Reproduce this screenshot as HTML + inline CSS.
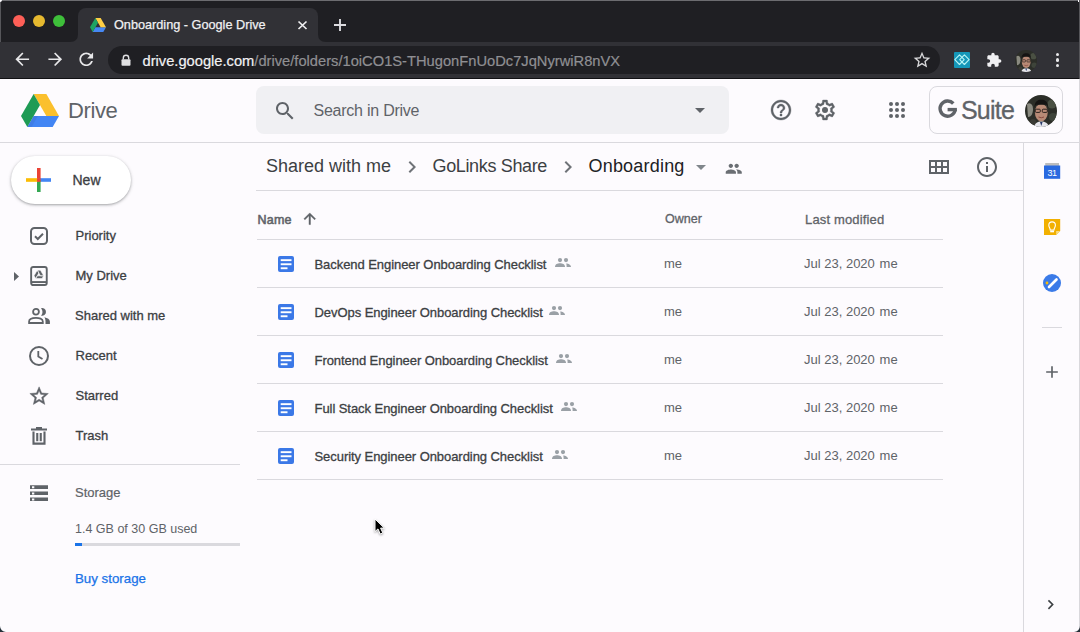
<!DOCTYPE html>
<html><head><meta charset="utf-8">
<style>
*{margin:0;padding:0;box-sizing:border-box}
html,body{width:1080px;height:632px;overflow:hidden;background:#fdfbfe;font-family:"Liberation Sans",sans-serif}
.a{position:absolute}
.t{position:absolute;white-space:nowrap;line-height:1}
.m{-webkit-text-stroke:0.3px currentColor}
svg{position:absolute;overflow:visible}
</style></head><body>
<!-- ============ CHROME ============ -->
<div class="a" style="left:0;top:0;width:1080px;height:79px;background:#1f1f23"></div>
<div class="a" style="left:0;top:0;width:1080px;height:1px;background:#6c6c70"></div>
<div class="a" style="left:1079px;top:0;width:1px;height:632px;background:#d9d8dc"></div>
<div class="a" style="left:0;top:0;width:1px;height:79px;background:#56565a"></div>
<div class="a" style="left:0;top:0;width:2px;height:2px;background:#fdfbfe;border-bottom-right-radius:2px"></div>
<div class="a" style="left:1078px;top:0;width:2px;height:2px;background:#fdfbfe"></div>
<!-- traffic lights -->
<div class="a" style="left:13px;top:15.2px;width:12px;height:12px;border-radius:50%;background:#fe5f57"></div>
<div class="a" style="left:33px;top:15.2px;width:12px;height:12px;border-radius:50%;background:#e6b92f"></div>
<div class="a" style="left:53px;top:15.2px;width:12px;height:12px;border-radius:50%;background:#3ebf3a"></div>
<!-- toolbar -->
<div class="a" style="left:0;top:41.5px;width:1080px;height:36.5px;background:#313136"></div>
<div class="a" style="left:0;top:78px;width:1080px;height:1px;background:#111114"></div>
<!-- tab -->
<div class="a" style="left:78px;top:8px;width:240px;height:34px;background:#313136;border-radius:8px 8px 0 0"></div>
<svg style="left:70px;top:33.5px" width="8" height="8"><path d="M0 8 Q8 8 8 0 L8 8Z" fill="#313136"/></svg>
<svg style="left:318px;top:33.5px" width="8" height="8"><path d="M8 8 Q0 8 0 0 L0 8Z" fill="#313136"/></svg>
<!-- favicon -->
<svg style="left:90px;top:17.6px" width="16" height="14" viewBox="0 0 1443 1250"><path fill="#4688f4" d="M240.5 1250l240.5-416.7h962L1202.5 1250z"/><path fill="#ffcf45" d="M962 833.3h481L962 0H481z"/><path fill="#1fa463" d="M0 833.3L240.5 1250l481-833.3L481 0z"/></svg>
<div class="t" style="left:114px;top:18.5px;font-size:12.7px;color:#f0f0f2;-webkit-text-stroke:0.25px #f0f0f2">Onboarding - Google Drive</div>
<svg style="left:297.5px;top:20.8px" width="9" height="8.5"><path d="M0.5 0.5L8.5 8M8.5 0.5L0.5 8" stroke="#f0f0f2" stroke-width="1.7"/></svg>
<svg style="left:334px;top:19px" width="12" height="12"><path d="M6 0V12M0 6H12" stroke="#dcdce0" stroke-width="1.9"/></svg>
<!-- nav -->
<svg style="left:11.6px;top:49px" width="20.5" height="20.5" viewBox="0 0 24 24"><path fill="#e8e8ea" d="M20 11H7.83l5.59-5.59L12 4l-8 8 8 8 1.41-1.41L7.83 13H20v-2z"/></svg>
<svg style="left:44.7px;top:49px" width="20.5" height="20.5" viewBox="0 0 24 24"><path fill="#e8e8ea" d="M12 4l-1.41 1.41L16.17 11H4v2h12.17l-5.58 5.59L12 20l8-8z"/></svg>
<svg style="left:75.7px;top:49px" width="20.5" height="20.5" viewBox="0 0 24 24"><path fill="#e8e8ea" d="M17.65 6.35C16.2 4.9 14.21 4 12 4c-4.42 0-7.99 3.58-7.99 8s3.57 8 7.99 8c3.73 0 6.84-2.55 7.73-6h-2.08c-.82 2.33-3.04 4-5.650 4-3.31 0-6-2.69-6-6s2.69-6 6-6c1.66 0 3.14.69 4.22 1.780L13 11h7V4l-2.35 2.35z"/></svg>
<!-- omnibox -->
<div class="a" style="left:108px;top:46px;width:832px;height:28px;border-radius:14px;background:#1f1f23"></div>
<svg style="left:121px;top:54px" width="10" height="12"><path d="M2.3 5.5V4a2.7 2.7 0 0 1 5.4 0v1.5" fill="none" stroke="#e0e0e2" stroke-width="1.4"/><rect x="0.5" y="5.2" width="9" height="6.6" rx="1" fill="#e0e0e2"/></svg>
<div class="t" style="left:142.5px;top:53.5px;font-size:14.7px;color:#f2f2f4;-webkit-text-stroke:0.2px currentColor">drive.google.com<span style="color:#8f8f93">/drive/folders/1oiCO1S-THugonFnUoDc7JqNyrwiR8nVX</span></div>
<svg style="left:912px;top:50px" width="20" height="20" viewBox="0 0 24 24"><path fill="#d8d8da" d="M22 9.24l-7.19-.62L12 2 9.19 8.63 2 9.24l5.46 4.73L5.82 21 12 17.27 18.18 21l-1.63-7.03L22 9.24zM12 15.4l-3.76 2.27 1-4.28-3.32-2.88 4.38-.38L12 6.1l1.71 4.04 4.38.38-3.32 2.88 1 4.28L12 15.4z"/></svg>
<!-- extension -->
<div class="a" style="left:954px;top:52px;width:16px;height:16px;border-radius:1px;background:#1597b8"></div>
<svg style="left:954px;top:52px" width="16" height="16"><path d="M5.5 2.9L10.2 7.7L5.5 12.5L0.8 7.7Z" fill="none" stroke="#b6f4f6" stroke-width="1.1" stroke-linejoin="round"/><path d="M10.4 2.9L15.1 7.7L10.4 12.5L5.7 7.7Z" fill="none" stroke="#b6f4f6" stroke-width="1.1" stroke-linejoin="round"/></svg>
<svg style="left:985.5px;top:52px" width="16" height="16" viewBox="0 0 24 24"><path fill="#f0f0f2" d="M20.5 11H19V7c0-1.1-.9-2-2-2h-4V3.5C13 2.12 11.88 1 10.5 1S8 2.12 8 3.5V5H4c-1.1 0-1.99.9-1.990 2v3.8H3.5c1.49 0 2.7 1.21 2.7 2.7s-1.21 2.7-2.7 2.7H2V20c0 1.1.9 2 2 2h3.8v-1.5c0-1.490 1.21-2.7 2.7-2.7 1.49 0 2.7 1.21 2.7 2.7V22H17c1.1 0 2-.9 2-2v-4h1.5c1.38 0 2.5-1.12 2.5-2.5S21.88 11 20.5 11z"/></svg>
<!-- chrome avatar -->
<svg style="left:1015px;top:49.5px" width="22" height="22" viewBox="0 0 32 32"><defs><clipPath id="avc2"><circle cx="16" cy="16" r="16"/></clipPath></defs><g clip-path="url(#avc2)"><rect width="32" height="32" fill="#2c2e28"/><path d="M2 9C5 7 8 9 8 14S6 22 3 22Z" fill="#8a8a80"/><circle cx="27" cy="9" r="4.5" fill="#4a5043"/><circle cx="28" cy="22" r="4" fill="#3e443a"/><circle cx="8" cy="27" r="3" fill="#3a3a34"/><ellipse cx="16.3" cy="17.5" rx="6.4" ry="8.8" fill="#b88a76"/><path d="M9.6 13C9.3 6.5 12.5 4.8 16.3 4.8S23.3 6.5 23 13L21.8 9.8H10.8Z" fill="#151413"/><rect x="10.3" y="14.2" width="5" height="3.2" rx="1" fill="none" stroke="#2a211d" stroke-width="1"/><rect x="17.3" y="14.2" width="5" height="3.2" rx="1" fill="none" stroke="#2a211d" stroke-width="1"/><path d="M13.5 22Q16.3 23.5 19 22" fill="none" stroke="#8a4a40" stroke-width="1"/><path d="M9 32C10 28 12.5 26.5 16.3 26.5S23 28 24 32Z" fill="#e4e4ea"/><path d="M15 27L16.3 31L17.6 27Z" fill="#2a3a6a"/></g></svg>
<div class="a" style="left:1056.3px;top:52.6px;width:3.2px;height:3.2px;border-radius:50%;background:#e8e8ea"></div>
<div class="a" style="left:1056.3px;top:58.4px;width:3.2px;height:3.2px;border-radius:50%;background:#e8e8ea"></div>
<div class="a" style="left:1056.3px;top:64.2px;width:3.2px;height:3.2px;border-radius:50%;background:#e8e8ea"></div>

<div class="a" style="left:1079px;top:0;width:1px;height:79px;background:#56565a"></div>
<!-- ============ DRIVE HEADER ============ -->
<svg style="left:21px;top:93.5px" width="38" height="33" viewBox="0 0 1443 1250"><path fill="#4285f4" d="M240.5 1250l240.5-416.7h962L1202.5 1250z"/><path fill="#fbc02d" d="M962 833.3h481L962 0H481z"/><path fill="#1e9b55" d="M0 833.3L240.5 1250l481-833.3L481 0z"/><path fill="#3b74d8" opacity=".5" d="M240.5 1250l240.5-416.7h160L400 1250z"/></svg>
<div class="t" style="left:68px;top:100.4px;font-size:22px;color:#5f6368;letter-spacing:-0.4px">Drive</div>
<!-- search -->
<div class="a" style="left:256px;top:86px;width:473px;height:48px;border-radius:8px;background:#f0f0f3"></div>
<svg style="left:273px;top:99px" width="24" height="24" viewBox="0 0 24 24"><path fill="#5f6368" d="M15.5 14h-.79l-.28-.27C15.41 12.59 16 11.11 16 9.5 16 5.91 13.09 3 9.5 3S3 5.91 3 9.5 5.91 16 9.5 16c1.61 0 3.090-.59 4.23-1.57l.27.28v.79l5 4.99L20.49 19l-4.99-5zm-6 0C7.01 14 5 11.99 5 9.5S7.01 5 9.5 5 14 7.01 14 9.5 11.99 14 9.5 14z"/></svg>
<div class="t" style="left:313.5px;top:103.1px;font-size:16px;color:#5f6368;letter-spacing:-0.24px">Search in Drive</div>
<svg style="left:688px;top:98px" width="24" height="24" viewBox="0 0 24 24"><path fill="#5f6368" d="M7 10l5 5 5-5z"/></svg>
<!-- help / settings / apps -->
<svg style="left:769px;top:98px" width="24" height="24" viewBox="0 0 24 24"><path fill="#5f6368" stroke="#5f6368" stroke-width="0.35" d="M11 18h2v-2h-2v2zm1-16C6.48 2 2 6.48 2 12s4.48 10 10 10 10-4.48 10-10S17.52 2 12 2zm0 18c-4.41 0-8-3.59-8-8s3.59-8 8-8 8 3.59 8 8-3.59 8-8 8zm0-14c-2.21 0-4 1.79-4 4h2c0-1.1.9-2 2-2s2 .9 2 2c0 2-3 1.75-3 5h2c0-2.25 3-2.5 3-5 0-2.21-1.79-4-4-4z"/></svg>
<svg style="left:813px;top:98px" width="24" height="24" viewBox="0 0 24 24"><path fill="#5f6368" stroke="#5f6368" stroke-width="0.35" d="M19.43 12.98c.04-.32.07-.64.07-.98 0-.34-.03-.66-.07-.98l2.11-1.65c.19-.15.24-.42.12-.64l-2-3.46c-.09-.16-.26-.25-.44-.25-.06 0-.12.01-.17.03l-2.49 1c-.52-.4-1.08-.73-1.69-.98l-.38-2.65C14.46 2.18 14.25 2 14 2h-4c-.25 0-.46.18-.49.42l-.38 2.65c-.61.25-1.17.59-1.690.98l-2.49-1c-.06-.02-.12-.03-.18-.03-.17 0-.34.09-.43.25l-2 3.46c-.13.22-.07.49.12.64l2.11 1.65c-.04.32-.07.65-.07.98 0 .33.03.66.07.98l-2.11 1.65c-.19.15-.24.42-.12.64l2 3.46c.09.16.26.25.44.25.06 0 .12-.01.17-.03l2.49-1c.52.4 1.08.73 1.69.98l.38 2.65c.03.24.24.42.49.42h4c.25 0 .46-.18.49-.42l.38-2.65c.61-.25 1.17-.59 1.69-.98l2.49 1c.06.02.12.03.18.03.17 0 .34-.09.43-.25l2-3.46c.12-.22.07-.49-.12-.64l-2.11-1.65zm-1.98-1.71c.04.31.05.52.05.73 0 .21-.02.43-.05.73l-.14 1.13.89.7 1.08.84-.7 1.21-1.27-.51-1.04-.42-.9.68c-.43.32-.84.56-1.25.73l-1.06.43-.16 1.13-.2 1.35h-1.4l-.19-1.35-.16-1.13-1.06-.43c-.43-.18-.83-.41-1.23-.71l-.91-.7-1.06.43-1.27.51-.7-1.21 1.08-.84.89-.7-.14-1.13c-.03-.31-.05-.54-.05-.74s.02-.43.05-.73l.14-1.13-.89-.7-1.08-.84.7-1.21 1.27.51 1.04.42.9-.68c.43-.32.84-.56 1.25-.73l1.06-.43.16-1.13.2-1.35h1.39l.19 1.35.16 1.13 1.06.43c.43.18.83.41 1.23.71l.91.7 1.06-.43 1.27-.51.7 1.21-1.07.85-.89.7.14 1.13z"/><circle cx="12" cy="12" r="3" fill="#5f6368"/></svg>
<svg style="left:889px;top:102px" width="16" height="16"><g fill="#5f6368"><circle cx="2" cy="2" r="2"/><circle cx="8" cy="2" r="2"/><circle cx="14" cy="2" r="2"/><circle cx="2" cy="8" r="2"/><circle cx="8" cy="8" r="2"/><circle cx="14" cy="8" r="2"/><circle cx="2" cy="14" r="2"/><circle cx="8" cy="14" r="2"/><circle cx="14" cy="14" r="2"/></g></svg>
<!-- G Suite -->
<div class="a" style="left:929px;top:86px;width:134px;height:48px;border-radius:8px;border:1px solid #dad9de"></div>
<svg style="left:937.5px;top:100.4px" width="20" height="19" viewBox="0 0 20 19"><path d="M15.3 3.5A7.6 7.6 0 1 0 17.2 9.6" fill="none" stroke="#5f6368" stroke-width="3.4"/><rect x="9.6" y="7.9" width="9.3" height="3.4" fill="#5f6368"/></svg>
<div class="t" style="left:961px;top:98px;font-size:25px;color:#5f6368;letter-spacing:-0.8px;-webkit-text-stroke:0.3px #5f6368">Suite</div>
<svg style="left:1025px;top:95px" width="32" height="32"><defs><clipPath id="avc"><circle cx="16" cy="16" r="16"/></clipPath></defs><g clip-path="url(#avc)"><rect width="32" height="32" fill="#2c2e28"/><path d="M2 9C5 7 8 9 8 14S6 22 3 22Z" fill="#8a8a80"/><circle cx="27" cy="9" r="4.5" fill="#4a5043"/><circle cx="28" cy="22" r="4" fill="#3e443a"/><circle cx="8" cy="27" r="3" fill="#3a3a34"/><ellipse cx="16.3" cy="17.5" rx="6.4" ry="8.8" fill="#b88a76"/><path d="M9.6 13C9.3 6.5 12.5 4.8 16.3 4.8S23.3 6.5 23 13L21.8 9.8H10.8Z" fill="#151413"/><rect x="10.3" y="14.2" width="5" height="3.2" rx="1" fill="none" stroke="#2a211d" stroke-width="1"/><rect x="17.3" y="14.2" width="5" height="3.2" rx="1" fill="none" stroke="#2a211d" stroke-width="1"/><path d="M13.5 22Q16.3 23.5 19 22" fill="none" stroke="#8a4a40" stroke-width="1"/><path d="M9 32C10 28 12.5 26.5 16.3 26.5S23 28 24 32Z" fill="#e4e4ea"/><path d="M15 27L16.3 31L17.6 27Z" fill="#2a3a6a"/></g></svg>
<!-- header line -->
<div class="a" style="left:0;top:142px;width:1080px;height:1px;background:#dad9de"></div>

<!-- ============ SIDEBAR ============ -->
<div class="a" style="left:11px;top:156px;width:120px;height:48px;border-radius:24px;background:#fff;box-shadow:0 1px 2px 0 rgba(60,64,67,.30),0 1px 3px 1px rgba(60,64,67,.15)"></div>
<svg style="left:26px;top:168px" width="25" height="24"><rect x="11" y="0" width="3.6" height="12" fill="#ea4335"/><rect x="12.5" y="10.2" width="12.5" height="3.6" fill="#4285f4"/><rect x="11" y="12" width="3.6" height="12" fill="#34a853"/><rect x="0" y="10.2" width="12.5" height="3.6" fill="#fbbc04"/><rect x="11" y="10.2" width="3.6" height="3.6" fill="#ea4335"/></svg>
<div class="t m" style="left:72.5px;top:173.3px;font-size:14px;color:#3c4043">New</div>

<!-- priority -->
<svg style="left:30px;top:227px" width="18" height="18"><rect x="1" y="1" width="16" height="16" rx="3.5" fill="none" stroke="#5f6368" stroke-width="2"/><path d="M5 9.2L7.8 12L13 6.8" fill="none" stroke="#5f6368" stroke-width="2"/></svg>
<div class="t m" style="left:75.5px;top:229.2px;font-size:13px;color:#3c4043">Priority</div>
<!-- my drive -->
<svg style="left:14px;top:271.5px" width="5" height="9"><path d="M0 0L5 4.5L0 9Z" fill="#5f6368"/></svg>
<svg style="left:30px;top:266px" width="18" height="20"><rect x="1.15" y="0.95" width="15.6" height="18.1" rx="2" fill="none" stroke="#5f6368" stroke-width="1.9"/><rect x="1" y="15.1" width="16" height="1.9" fill="#5f6368"/><svg x="4" y="4.2" width="9.7" height="8.4" viewBox="0 0 1443 1250"><path fill="#5f6368" stroke="#fdfbfe" stroke-width="90" d="M240.5 1250l240.5-416.7h962L1202.5 1250zM962 833.3h481L962 0H481zM0 833.3L240.5 1250l481-833.3L481 0z"/></svg></svg>
<div class="t m" style="left:75.5px;top:269.2px;font-size:13px;color:#3c4043">My Drive</div>
<!-- shared -->
<svg style="left:28px;top:308px" width="22" height="16"><circle cx="8" cy="3.7" r="2.9" fill="none" stroke="#5f6368" stroke-width="1.8"/><path d="M1.1 15V13.5C1.1 10.5 5 9.9 8 9.9S14.8 10.5 14.8 13.5V15Z" fill="none" stroke="#5f6368" stroke-width="1.8"/><path d="M13 0.2A3.9 3.9 0 1 1 13 7.7A5.44 5.44 0 0 0 13 0.2Z" fill="#5f6368"/><path d="M16.4 9.3C19.5 10 21.9 11.5 21.9 13.5V15.9H17.5V13.5C17.5 11.8 17.2 10.4 16.4 9.3Z" fill="#5f6368"/></svg>
<div class="t m" style="left:75px;top:309.2px;font-size:13px;color:#3c4043">Shared with me</div>
<!-- recent -->
<svg style="left:29px;top:346px" width="20" height="20"><circle cx="10" cy="10" r="9" fill="none" stroke="#5f6368" stroke-width="2"/><path d="M9.3 5V10.5L13.5 13" fill="none" stroke="#5f6368" stroke-width="1.8"/></svg>
<div class="t m" style="left:75.5px;top:349.2px;font-size:13px;color:#3c4043">Recent</div>
<!-- starred -->
<svg style="left:27.75px;top:385px" width="22.2" height="22.2" viewBox="0 0 24 24"><path fill="#5f6368" stroke="#5f6368" stroke-width="0.5" d="M22 9.24l-7.19-.62L12 2 9.19 8.63 2 9.24l5.46 4.73L5.82 21 12 17.27 18.18 21l-1.63-7.03L22 9.24zM12 15.4l-3.76 2.27 1-4.28-3.32-2.88 4.38-.38L12 6.1l1.71 4.04 4.38.38-3.32 2.88 1 4.28L12 15.4z"/></svg>
<div class="t m" style="left:75.5px;top:389.2px;font-size:13px;color:#3c4043">Starred</div>
<!-- trash -->
<svg style="left:31px;top:427px" width="16" height="18"><rect x="0" y="1.5" width="16" height="2" fill="#5f6368"/><rect x="5" y="0" width="6" height="2" fill="#5f6368"/><path d="M2.5 4.5V16.6H13.5V4.5" fill="none" stroke="#5f6368" stroke-width="2.1"/><rect x="5.2" y="6" width="2.1" height="8.2" fill="#5f6368"/><rect x="8.7" y="6" width="2.1" height="8.2" fill="#5f6368"/></svg>
<div class="t m" style="left:75.5px;top:429.2px;font-size:13px;color:#3c4043">Trash</div>
<!-- divider -->
<div class="a" style="left:0;top:464px;width:240px;height:1px;background:#dad9de"></div>
<!-- storage -->
<svg style="left:30px;top:484.6px" width="18" height="16.2"><path fill="#5f6368" fill-rule="evenodd" d="M0 0.3H18V4H0ZM2 1.3V3.3H4.3V1.3Z M0 6.4H18V10.1H0ZM2 7.4V9.4H4.3V7.4Z M0 12.4H18V16.1H0ZM2 13.4V15.4H4.3V13.4Z"/></svg>
<div class="t" style="left:75px;top:486.2px;font-size:13px;color:#5f6368;-webkit-text-stroke:0.2px #5f6368">Storage</div>
<div class="t" style="left:75px;top:522.5px;font-size:12.5px;color:#5f6368">1.4 GB of 30 GB used</div>
<div class="a" style="left:75px;top:543px;width:165px;height:3px;background:#dad9de"></div>
<div class="a" style="left:75px;top:543px;width:7px;height:3px;background:#1a73e8"></div>
<div class="t m" style="left:75px;top:572px;font-size:13.3px;color:#1a73e8;-webkit-text-stroke:0.25px #1a73e8">Buy storage</div>

<!-- ============ MAIN ============ -->
<div class="t" style="left:266px;top:157px;font-size:18px;color:#3c4043">Shared with me</div>
<svg style="left:400.4px;top:155px" width="24" height="24" viewBox="0 0 24 24"><path fill="#6f7378" d="M10 6L8.59 7.41 13.17 12l-4.58 4.59L10 18l6-6z"/></svg>
<div class="t" style="left:432.5px;top:157px;font-size:18px;color:#3c4043;letter-spacing:-0.35px">GoLinks Share</div>
<svg style="left:556px;top:155px" width="24" height="24" viewBox="0 0 24 24"><path fill="#6f7378" d="M10 6L8.59 7.41 13.17 12l-4.58 4.59L10 18l6-6z"/></svg>
<div class="t" style="left:588.5px;top:157px;font-size:18px;color:#202124;letter-spacing:0.2px">Onboarding</div>
<svg style="left:689px;top:155px" width="24" height="24" viewBox="0 0 24 24"><path fill="#80868b" d="M7 10l5 5 5-5z"/></svg>
<svg style="left:725px;top:160.2px" width="17.5" height="17.5" viewBox="0 0 24 24"><path fill="#6a6e73" d="M16 11c1.66 0 2.99-1.34 2.99-3S17.66 5 16 5c-1.66 0-3 1.34-3 3s1.34 3 3 3zm-8 0c1.66 0 2.99-1.34 2.99-3S9.66 5 8 5C6.34 5 5 6.34 5 8s1.34 3 3 3zm0 2c-2.33 0-7 1.17-7 3.5V19h14v-2.5c0-2.33-4.67-3.5-7-3.5zm8 0c-.29 0-.62.02-.97.05 1.16.84 1.97 1.97 1.97 3.45V19h6v-2.5c0-2.33-4.67-3.5-7-3.5z"/></svg>
<!-- grid / info -->
<svg style="left:929px;top:160px" width="20" height="14"><path d="M0 0H20V14H0ZM2 2V6H6V2ZM8 2V6H12V2ZM14 2V6H18V2ZM2 8V12H6V8ZM8 8V12H12V8ZM14 8V12H18V8Z" fill="#5f6368" fill-rule="evenodd"/></svg>
<svg style="left:975px;top:155px" width="24" height="24" viewBox="0 0 24 24"><path fill="#5f6368" d="M11 7h2v2h-2zm0 4h2v6h-2zm1-9C6.48 2 2 6.48 2 12s4.48 10 10 10 10-4.48 10-10S17.52 2 12 2zm0 18c-4.41 0-8-3.59-8-8s3.59-8 8-8 8 3.59 8 8-3.59 8-8 8z"/></svg>
<div class="a" style="left:256px;top:190px;width:767px;height:1px;background:#dad9de"></div>
<div class="a" style="left:1023px;top:143px;width:1px;height:489px;background:#dad9de"></div>

<!-- table header -->
<div class="t" style="left:257.5px;top:213.6px;font-size:12.5px;color:#5f6368;letter-spacing:0.2px;-webkit-text-stroke:0.55px #5f6368">Name</div>
<svg style="left:300.5px;top:210.1px" width="17.5" height="17.5" viewBox="0 0 24 24"><path fill="#5f6368" stroke="#5f6368" stroke-width="0.6" d="M4 12l1.41 1.41L11 7.83V20h2V7.83l5.58 5.59L20 12l-8-8-8 8z"/></svg>
<div class="t m" style="left:665px;top:213.2px;font-size:12.5px;color:#5f6368">Owner</div>
<div class="t m" style="left:805px;top:213.2px;font-size:13px;color:#5f6368;letter-spacing:0.15px">Last modified</div>
<div class="a" style="left:257px;top:239px;width:686px;height:1px;background:#dad9de"></div>

<svg style="left:278px;top:256px" width="16" height="16"><rect width="16" height="16" rx="2" fill="#3b78e7"/><rect x="2.7" y="3.2" width="10.8" height="1.9" fill="#fff"/><rect x="2.7" y="7.3" width="10.8" height="1.9" fill="#fff"/><rect x="2.7" y="11.3" width="6.8" height="1.9" fill="#fff"/></svg>
<div class="t m" style="left:314.5px;top:257.7px;font-size:13px;color:#3c4043;letter-spacing:-0.06px">Backend Engineer Onboarding Checklist</div>
<svg class="ppl" style="left:555px;top:258.3px" width="16" height="9"><circle cx="5" cy="2.1" r="2.1" fill="#9aa0a6"/><circle cx="11" cy="2.1" r="2.1" fill="#9aa0a6"/><path d="M0 9C0 6.3 2.5 5.3 5 5.3S10 6.3 10 9Z" fill="#9aa0a6"/><path d="M11.2 5.4C13.5 5.6 16 6.5 16 9H11.6C11.6 7.6 11.6 6.3 11.2 5.4Z" fill="#9aa0a6"/></svg>
<div class="t" style="left:664px;top:256.9px;font-size:13px;color:#5f6368">me</div>
<div class="t" style="left:804px;top:256.9px;font-size:13px;color:#5f6368">Jul 23, 2020</div>
<div class="t" style="left:879.6px;top:256.9px;font-size:13px;color:#5f6368">me</div>
<div class="a" style="left:257px;top:287px;width:686px;height:1px;background:#dad9de"></div>
<svg style="left:278px;top:304px" width="16" height="16"><rect width="16" height="16" rx="2" fill="#3b78e7"/><rect x="2.7" y="3.2" width="10.8" height="1.9" fill="#fff"/><rect x="2.7" y="7.3" width="10.8" height="1.9" fill="#fff"/><rect x="2.7" y="11.3" width="6.8" height="1.9" fill="#fff"/></svg>
<div class="t m" style="left:314.5px;top:305.7px;font-size:13px;color:#3c4043;letter-spacing:-0.06px">DevOps Engineer Onboarding Checklist</div>
<svg class="ppl" style="left:549px;top:306.3px" width="16" height="9"><circle cx="5" cy="2.1" r="2.1" fill="#9aa0a6"/><circle cx="11" cy="2.1" r="2.1" fill="#9aa0a6"/><path d="M0 9C0 6.3 2.5 5.3 5 5.3S10 6.3 10 9Z" fill="#9aa0a6"/><path d="M11.2 5.4C13.5 5.6 16 6.5 16 9H11.6C11.6 7.6 11.6 6.3 11.2 5.4Z" fill="#9aa0a6"/></svg>
<div class="t" style="left:664px;top:304.9px;font-size:13px;color:#5f6368">me</div>
<div class="t" style="left:804px;top:304.9px;font-size:13px;color:#5f6368">Jul 23, 2020</div>
<div class="t" style="left:879.6px;top:304.9px;font-size:13px;color:#5f6368">me</div>
<div class="a" style="left:257px;top:335px;width:686px;height:1px;background:#dad9de"></div>
<svg style="left:278px;top:352px" width="16" height="16"><rect width="16" height="16" rx="2" fill="#3b78e7"/><rect x="2.7" y="3.2" width="10.8" height="1.9" fill="#fff"/><rect x="2.7" y="7.3" width="10.8" height="1.9" fill="#fff"/><rect x="2.7" y="11.3" width="6.8" height="1.9" fill="#fff"/></svg>
<div class="t m" style="left:314.5px;top:353.7px;font-size:13px;color:#3c4043;letter-spacing:-0.06px">Frontend Engineer Onboarding Checklist</div>
<svg class="ppl" style="left:556px;top:354.3px" width="16" height="9"><circle cx="5" cy="2.1" r="2.1" fill="#9aa0a6"/><circle cx="11" cy="2.1" r="2.1" fill="#9aa0a6"/><path d="M0 9C0 6.3 2.5 5.3 5 5.3S10 6.3 10 9Z" fill="#9aa0a6"/><path d="M11.2 5.4C13.5 5.6 16 6.5 16 9H11.6C11.6 7.6 11.6 6.3 11.2 5.4Z" fill="#9aa0a6"/></svg>
<div class="t" style="left:664px;top:352.9px;font-size:13px;color:#5f6368">me</div>
<div class="t" style="left:804px;top:352.9px;font-size:13px;color:#5f6368">Jul 23, 2020</div>
<div class="t" style="left:879.6px;top:352.9px;font-size:13px;color:#5f6368">me</div>
<div class="a" style="left:257px;top:383px;width:686px;height:1px;background:#dad9de"></div>
<svg style="left:278px;top:400px" width="16" height="16"><rect width="16" height="16" rx="2" fill="#3b78e7"/><rect x="2.7" y="3.2" width="10.8" height="1.9" fill="#fff"/><rect x="2.7" y="7.3" width="10.8" height="1.9" fill="#fff"/><rect x="2.7" y="11.3" width="6.8" height="1.9" fill="#fff"/></svg>
<div class="t m" style="left:314.5px;top:401.7px;font-size:13px;color:#3c4043;letter-spacing:-0.06px">Full Stack Engineer Onboarding Checklist</div>
<svg class="ppl" style="left:561px;top:402.3px" width="16" height="9"><circle cx="5" cy="2.1" r="2.1" fill="#9aa0a6"/><circle cx="11" cy="2.1" r="2.1" fill="#9aa0a6"/><path d="M0 9C0 6.3 2.5 5.3 5 5.3S10 6.3 10 9Z" fill="#9aa0a6"/><path d="M11.2 5.4C13.5 5.6 16 6.5 16 9H11.6C11.6 7.6 11.6 6.3 11.2 5.4Z" fill="#9aa0a6"/></svg>
<div class="t" style="left:664px;top:400.9px;font-size:13px;color:#5f6368">me</div>
<div class="t" style="left:804px;top:400.9px;font-size:13px;color:#5f6368">Jul 23, 2020</div>
<div class="t" style="left:879.6px;top:400.9px;font-size:13px;color:#5f6368">me</div>
<div class="a" style="left:257px;top:431px;width:686px;height:1px;background:#dad9de"></div>
<svg style="left:278px;top:448px" width="16" height="16"><rect width="16" height="16" rx="2" fill="#3b78e7"/><rect x="2.7" y="3.2" width="10.8" height="1.9" fill="#fff"/><rect x="2.7" y="7.3" width="10.8" height="1.9" fill="#fff"/><rect x="2.7" y="11.3" width="6.8" height="1.9" fill="#fff"/></svg>
<div class="t m" style="left:314.5px;top:449.7px;font-size:13px;color:#3c4043;letter-spacing:-0.06px">Security Engineer Onboarding Checklist</div>
<svg class="ppl" style="left:552px;top:450.3px" width="16" height="9"><circle cx="5" cy="2.1" r="2.1" fill="#9aa0a6"/><circle cx="11" cy="2.1" r="2.1" fill="#9aa0a6"/><path d="M0 9C0 6.3 2.5 5.3 5 5.3S10 6.3 10 9Z" fill="#9aa0a6"/><path d="M11.2 5.4C13.5 5.6 16 6.5 16 9H11.6C11.6 7.6 11.6 6.3 11.2 5.4Z" fill="#9aa0a6"/></svg>
<div class="t" style="left:664px;top:448.9px;font-size:13px;color:#5f6368">me</div>
<div class="t" style="left:804px;top:448.9px;font-size:13px;color:#5f6368">Jul 23, 2020</div>
<div class="t" style="left:879.6px;top:448.9px;font-size:13px;color:#5f6368">me</div>
<div class="a" style="left:257px;top:479px;width:686px;height:1px;background:#dad9de"></div>
<!-- ============ RIGHT PANEL ============ -->
<svg style="left:1043.8px;top:163px" width="16.2" height="16"><rect x="1.2" y="0" width="13.8" height="3" fill="#bdbdbd"/><rect x="0" y="2.5" width="16.2" height="13.3" fill="#2a6ae0"/><text x="8.1" y="12.6" text-anchor="middle" font-family="Liberation Sans" font-size="9" letter-spacing="-0.4" fill="#fff">31</text></svg>
<svg style="left:1043.8px;top:219px" width="16.2" height="16"><path d="M0 0H16.2V12L12.2 16H0Z" fill="#f2b000"/><path d="M16.2 12L12.2 16V12Z" fill="#f8dc88"/><path d="M6.2 11C6.2 9 4.8 8.5 4.8 6.2A3.3 3.3 0 0 1 11.4 6.2C11.4 8.5 10 9 10 11Z" fill="none" stroke="#fff" stroke-width="1.1"/><rect x="6.2" y="11.5" width="3.8" height="1.8" fill="#fff"/></svg>
<svg style="left:1043px;top:274px" width="18" height="18"><circle cx="9" cy="9" r="9" fill="#3b7be8"/><path d="M6 13L13.5 5.5" stroke="#fff" stroke-width="2.6" stroke-linecap="round"/><circle cx="4" cy="9" r="1.4" fill="#fbbc04"/></svg>
<div class="a" style="left:1042px;top:327px;width:20px;height:1px;background:#dad9de"></div>
<svg style="left:1041.8px;top:362px" width="20" height="20" viewBox="0 0 24 24"><path fill="#5f6368" d="M19 13h-6v6h-2v-6H5v-2h6V5h2v6h6v2z"/></svg>
<svg style="left:1041px;top:594.5px" width="19.2" height="19.2" viewBox="0 0 24 24"><path fill="#3c4043" d="M10 6L8.59 7.41 13.17 12l-4.58 4.59L10 18l6-6z"/></svg>

<svg style="left:0;top:626px" width="6" height="6"><path d="M0 0A6 6 0 0 0 6 6H0Z" fill="#243038"/></svg>
<svg style="left:1074px;top:626px" width="6" height="6"><path d="M6 0A6 6 0 0 1 0 6H6Z" fill="#243038"/></svg>
<!-- cursor -->
<svg style="left:374px;top:517.5px;filter:drop-shadow(0.5px 1px 1px rgba(0,0,0,.35))" width="11" height="17"><path d="M1 1V13.6L4 10.9L6.2 16L8.8 14.9L6.6 10.1H10.3Z" fill="#000" stroke="#fff" stroke-width="1"/></svg>
</body></html>
